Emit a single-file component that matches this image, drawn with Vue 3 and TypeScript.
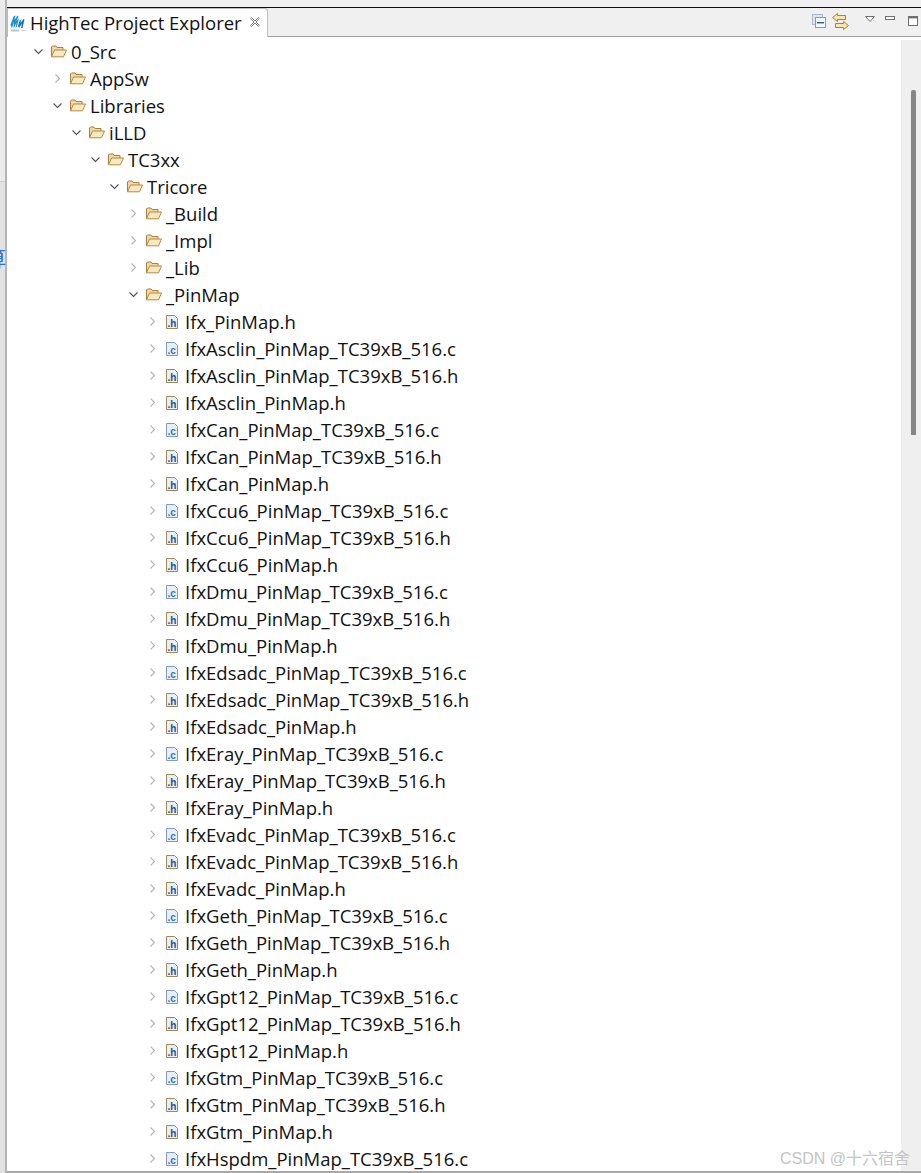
<script setup lang="ts">
interface Row { name: string; depth: number; kind: 'folder' | 'h' | 'c'; open?: boolean }
const top: Row[] = [
  { name: '0_Src', depth: 0, kind: 'folder', open: true },
  { name: 'AppSw', depth: 1, kind: 'folder' },
  { name: 'Libraries', depth: 1, kind: 'folder', open: true },
  { name: 'iLLD', depth: 2, kind: 'folder', open: true },
  { name: 'TC3xx', depth: 3, kind: 'folder', open: true },
  { name: 'Tricore', depth: 4, kind: 'folder', open: true },
  { name: '_Build', depth: 5, kind: 'folder' },
  { name: '_Impl', depth: 5, kind: 'folder' },
  { name: '_Lib', depth: 5, kind: 'folder' },
  { name: '_PinMap', depth: 5, kind: 'folder', open: true },
  { name: 'Ifx_PinMap.h', depth: 6, kind: 'h' },
]
const mods = ['Asclin', 'Can', 'Ccu6', 'Dmu', 'Edsadc', 'Eray', 'Evadc', 'Geth', 'Gpt12', 'Gtm']
const rows: Row[] = [...top]
for (const m of mods) {
  rows.push({ name: `Ifx${m}_PinMap_TC39xB_516.c`, depth: 6, kind: 'c' })
  rows.push({ name: `Ifx${m}_PinMap_TC39xB_516.h`, depth: 6, kind: 'h' })
  rows.push({ name: `Ifx${m}_PinMap.h`, depth: 6, kind: 'h' })
}
rows.push({ name: 'IfxHspdm_PinMap_TC39xB_516.c', depth: 6, kind: 'c' })
</script>

<template>
  <div class="page">
    <div class="gutter"><span class="clipped">算</span></div>
    <div class="main">
      <div class="topbar"></div>
      <div class="tabbar">
        <div class="tab">
          <svg class="logo" width="16" height="17" viewBox="0 0 16 17">
            <path d="M0.5 10 L3.5 1.5 L5.5 0.5 L4.5 5 L7.5 0.5 L8.5 1.5 L6.5 6 L9 3 L7 11.5 L5.5 13 L6.5 7.5 L4 13 L3.5 12 L4 7 L2 13Z" fill="#1b8fd8" />
            <path d="M8 11 L10 4.5 L11 5 L10.5 8 L13.5 4 L14.5 4.5 L12.5 13 L11 13 L12 8.5 L9 13Z" fill="#1c6fc4" />
            <rect x="1" y="14.5" width="8" height="2" fill="#a9c4e0" />
            <rect x="11" y="15" width="5" height="1" fill="#c8d6e6" />
          </svg>
          <span class="tab-title">HighTec Project Explorer</span>
          <svg class="close" width="12" height="12" viewBox="0 0 12 12">
            <path d="M1.5 2.5 L2.5 1.5 L6 5 L9.5 1.5 L10.5 2.5 L7 6 L10.5 9.5 L9.5 10.5 L6 7 L2.5 10.5 L1.5 9.5 L5 6Z" fill="#fff" stroke="#7d7d7d" stroke-width="1" />
          </svg>
        </div>
        <div class="tools">
          <svg width="14" height="14" viewBox="0 0 14 14">
            <rect x="0.5" y="0.5" width="10" height="10" fill="#dfe7f2" stroke="#a5b6d0" />
            <rect x="3.5" y="3.5" width="10" height="10" fill="#f4f7fb" stroke="#8398b8" />
            <rect x="5" y="8" width="7" height="1.4" fill="#1f5f96" />
          </svg>
          <svg class="sync" width="17" height="17" viewBox="0 0 17 17">
            <path d="M5.5 0.5 L0.5 4.5 L5.5 8.5 V6.5 H13.5 V2.5 H5.5Z" fill="#fbe7ae" stroke="#b9801a" />
            <path d="M11.5 8.5 L16.5 12.5 L11.5 16.5 V14.5 H3.5 V10.5 H11.5Z" fill="#fbe7ae" stroke="#b9801a" />
          </svg>
          <svg class="menu" width="10" height="6" viewBox="0 0 10 6">
            <path d="M0.5 0.5 H9.5 L5 5.5Z" fill="#fff" stroke="#6f6f6f" />
          </svg>
          <svg class="min" width="10" height="4" viewBox="0 0 10 4">
            <rect x="0.5" y="0.5" width="9" height="3" fill="#fff" stroke="#6f6f6f" />
          </svg>
          <svg class="max" width="10" height="10" viewBox="0 0 10 10">
            <rect x="0.5" y="0.5" width="9" height="9" fill="#fff" stroke="#6f6f6f" />
            <rect x="0" y="0" width="10" height="2.4" fill="#6f6f6f" />
          </svg>
        </div>
      </div>
      <div class="body">
        <div class="tree">
          <div v-for="r in rows" :key="r.name" class="row" :class="'d' + r.depth">
            <svg v-if="r.open" class="twist" width="9" height="9" viewBox="0 0 9 9">
              <path d="M0.5 2.5 L4.5 6.5 L8.5 2.5" fill="none" stroke="#555" stroke-width="1.1" />
            </svg>
            <svg v-else class="twist" width="9" height="9" viewBox="0 0 9 9">
              <path d="M2.5 0.5 L6.5 4.5 L2.5 8.5" fill="none" stroke="#b4b4b4" stroke-width="1.1" />
            </svg>
            <svg v-if="r.kind === 'folder'" class="ico" width="16" height="13" viewBox="0 0 16 13">
              <path d="M0.5 11.5 V2 L1.5 1 H5 L6 2.5 H12 V5" fill="#f0d9a8" stroke="#a8803f" />
              <path d="M0.5 11.8 L3.5 5 H15.5 L12.5 11.8Z" fill="#f9e9c2" stroke="#b8883f" />
            </svg>
            <svg v-else class="ico file" width="12" height="14" viewBox="0 0 12 14">
              <path d="M0.5 0.5 H8.5 L11.5 3.5 V13.5 H0.5Z" fill="#e8eff8" :stroke="r.kind === 'h' ? '#9c8a58' : '#7f9ac0'" />
              <text x="1.5" y="11.5" class="glyph" :fill="r.kind === 'h' ? '#1f4f8c' : '#2f74c0'">.{{ r.kind }}</text>
            </svg>
            <span class="label">{{ r.name }}</span>
          </div>
        </div>
        <div class="scroll"><div class="thumb"></div></div>
      </div>
      <div class="bottom"></div>
    </div>
    <div class="mark">CSDN @十六宿舍</div>
  </div>
</template>

<style>
html, body { margin: 0; background: #fff; }
</style>
<style scoped>
.page { position: relative; width: 921px; height: 1173px; overflow: hidden; display: flex; background: #fff; font-family: "Open Sans", "Noto Sans", sans-serif; color: #111; }
.gutter { width: 7px; flex: none; box-sizing: border-box; background: linear-gradient(#ebebeb 0 181px, #cfcfcf 181px 182px, #e2e2e2 182px); box-shadow: inset -2px 0 #b4b4b4; overflow: hidden; padding-top: 246px; }
.clipped { display: block; margin-left: -15px; font: 21px/22px "Noto Sans CJK SC", sans-serif; color: #2a6fd6; }
.main { flex: 1; min-width: 0; display: flex; flex-direction: column; }
.topbar { height: 7px; flex: none; background: #f0f0f0; border-bottom: 1px solid #111; }
.tabbar { height: 28px; flex: none; display: flex; background: #f0f0f0; border-bottom: 1px solid #a0a0a0; }
.tab { width: 261px; height: 29px; box-sizing: border-box; display: flex; align-items: center; background: #fff; border: 1px solid #bdbdbd; border-bottom: 0; border-top-right-radius: 3px; padding: 0 0 2px 2px; }
.logo { flex: none; margin-top: 2px; }
.tab-title { margin-left: 4px; font-size: 18.5px; white-space: nowrap; }
.close { margin-left: 7px; flex: none; }
.tools { margin-left: auto; display: flex; align-items: center; padding-right: 3px; height: 26px; }
.sync { margin-left: 6px; }
.menu { margin-left: 16px; margin-top: -4px; }
.min { margin-left: 10px; margin-top: -7px; }
.max { margin-left: 13px; margin-top: -1px; }
.body { flex: 1; min-height: 0; display: flex; overflow: hidden; }
.tree { flex: 1; min-width: 0; padding-top: 1px; }
.row { height: 27px; display: flex; align-items: center; white-space: nowrap; }
.d0 { padding-left: 27px; }
.d1 { padding-left: 46px; }
.d2 { padding-left: 65px; }
.d3 { padding-left: 84px; }
.d4 { padding-left: 103px; }
.d5 { padding-left: 122px; }
.d6 { padding-left: 141px; }
.twist { flex: none; }
.ico { margin-left: 8px; flex: none; }
.file { margin-left: 9px; margin-right: 3px; width: 12px; }
.glyph { font: bold 10px "Liberation Sans", sans-serif; }
.label { margin-left: 4px; font-size: 18.5px; }
.scroll { width: 20px; flex: none; background: #efefef; margin-top: 3px; }
.thumb { width: 5px; height: 345px; margin: 50px 0 0 10px; background: #868686; border-radius: 2px 2px 0 0; }
.bottom { height: 2px; flex: none; background: #a8a8a8; }
.mark { position: absolute; right: 11px; bottom: 4px; font: 16px "Liberation Sans", "Noto Sans CJK SC", sans-serif; color: #c4c4c4; }
</style>
